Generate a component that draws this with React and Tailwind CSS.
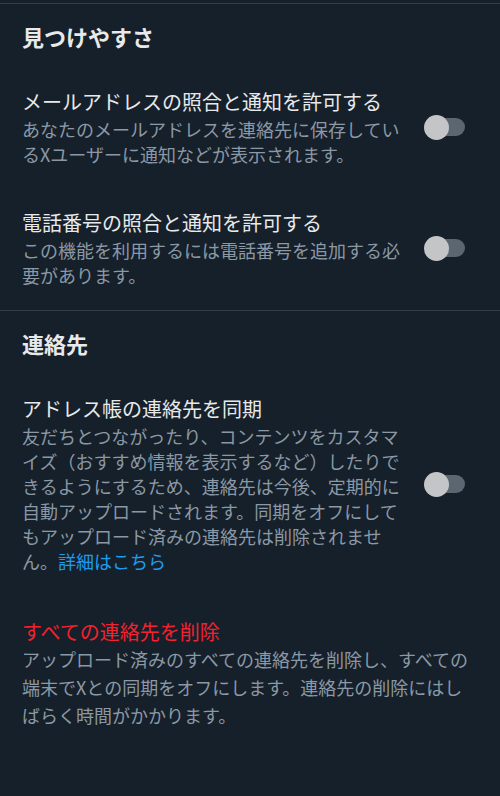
import React from 'react';

const font = { fontFamily: '"Noto Sans CJK JP", "Noto Sans", sans-serif' };

function Toggle() {
  return (
    <div className="relative w-[41px] h-[25px] shrink-0 ml-auto mr-[13px]">
      <div className="absolute left-[3px] top-[3.5px] w-[38px] h-[18px] rounded-full bg-[#5b6670]"></div>
      <div className="absolute left-0 top-0 w-[25px] h-[25px] rounded-full bg-[#c4c5c6]"></div>
    </div>
  );
}

function SettingRow({ title, children, className }) {
  return (
    <div className={'flex items-center ' + (className || '')}>
      <div className="w-[390px] shrink-0">
        <div className="text-[20px] leading-[30px] text-[#e7e9ea]">{title}</div>
        <p className="text-[18px] leading-[25px] text-[#8b98a5]">{children}</p>
      </div>
      <Toggle />
    </div>
  );
}

export default function App() {
  return (
    <div className="w-[500px] h-[796px] bg-[#16202a] overflow-hidden" style={font}>
      <div className="h-[3px]"></div>
      <section className="border-t border-[#343f49] pt-[17px] px-[22px] pb-[22px]">
        <h2 className="text-[22px] leading-[30px] font-bold text-[#e7e9ea]">見つけやすさ</h2>
        <SettingRow title="メールアドレスの照合と通知を許可する" className="mt-[36px]">
          あなたのメールアドレスを連絡先に保存しているXユーザーに通知などが表示されます。
        </SettingRow>
        <SettingRow title="電話番号の照合と通知を許可する" className="mt-[41px]">
          この機能を利用するには電話番号を追加する必要があります。
        </SettingRow>
      </section>

      <section className="border-t border-[#343f49] pt-[17px] px-[22px]">
        <h2 className="text-[22px] leading-[30px] font-bold text-[#e7e9ea]">連絡先</h2>
        <SettingRow title="アドレス帳の連絡先を同期" className="mt-[36px]">
          友だちとつながったり、コンテンツをカスタマイズ（おすすめ情報を表示するなど）したりできるようにするため、連絡先は今後、定期的に自動アップロードされます。同期をオフにしてもアップロード済みの連絡先は削除されません。<span className="text-[#1d9bf0]">詳細はこちら</span>
        </SettingRow>

        <div className="mt-[45px]">
          <div className="text-[20px] leading-[26px] text-[#f4212e]">すべての連絡先を削除</div>
          <p className="text-[18px] leading-[28px] text-[#8b98a5]">
            アップロード済みのすべての連絡先を削除し、すべての端末でXとの同期をオフにします。連絡先の削除にはしばらく時間がかかります。
          </p>
        </div>
      </section>
    </div>
  );
}
